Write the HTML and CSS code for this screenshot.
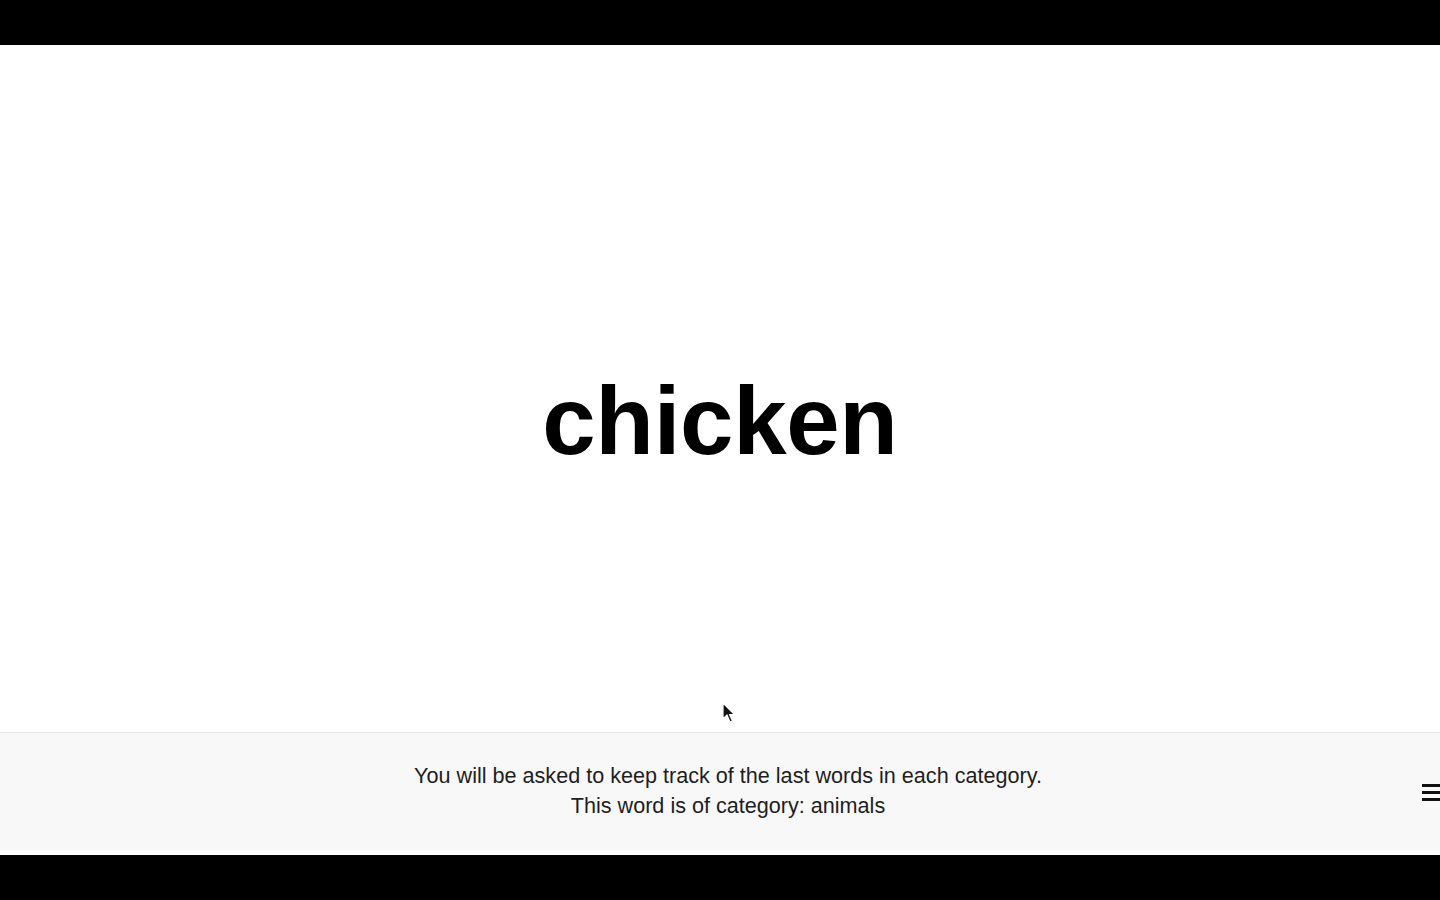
FILE: index.html
```html
<!DOCTYPE html>
<html lang="en">
<head>
<meta charset="utf-8">
<title>chicken</title>
<link rel="stylesheet" href="styles.css">
</head>
<body>
<div class="screen">
  <div class="letterbox"></div>
  <main class="stage">
    <div class="word">chicken</div>
    <svg class="cursor" width="14" height="22" viewBox="0 0 14 22" aria-hidden="true">
      <path d="M1 1 L1 17 L5 13 L8 20 L10.5 19 L7.5 12.5 L12.5 12.5 Z" fill="#111" stroke="#fff" stroke-width="1.2" stroke-linejoin="round"/>
    </svg>
  </main>
  <footer class="footer">
    <p class="instructions">You will be asked to keep track of the last words in each category.<br>This word is of category: animals</p>
    <div class="menu" aria-label="menu"><span></span><span></span><span></span></div>
  </footer>
  <div class="gap"></div>
  <div class="letterbox bottom"></div>
</div>
</body>
</html>
```

FILE: styles.css
```css
html, body {
  margin: 0;
  padding: 0;
  background: #000;
  overflow: hidden;
}
.screen {
  width: 1440px;
  height: 900px;
  display: flex;
  flex-direction: column;
  font-family: "Liberation Sans", Arial, Helvetica, sans-serif;
}
.letterbox {
  height: 45px;
  background: #000;
  flex: none;
}
.letterbox.bottom {
  flex: 1;
}
.stage {
  position: relative;
  height: 687px;
  background: #fff;
  box-sizing: border-box;
  padding-top: 328px;
  flex: none;
}
.word {
  text-align: center;
  font-size: 96px;
  line-height: 96px;
  font-weight: bold;
  color: #000;
  letter-spacing: -0.3px;
}
.cursor {
  position: absolute;
  left: 722px;
  top: 657px;
}
.footer {
  position: relative;
  height: 118px;
  box-sizing: border-box;
  border-top: 1px solid #e4e4e4;
  background: #f8f8f8;
  padding: 28px 0 0 16px;
  flex: none;
}
.instructions {
  margin: 0;
  text-align: center;
  font-size: 21.6px;
  line-height: 30px;
  color: #1e1e1e;
}
.menu {
  position: absolute;
  left: 1422px;
  top: 51px;
  width: 22px;
  display: flex;
  flex-direction: column;
  gap: 4px;
}
.menu span {
  display: block;
  height: 3px;
  background: #111;
}
.gap {
  height: 5px;
  background: #fff;
  flex: none;
}
```
